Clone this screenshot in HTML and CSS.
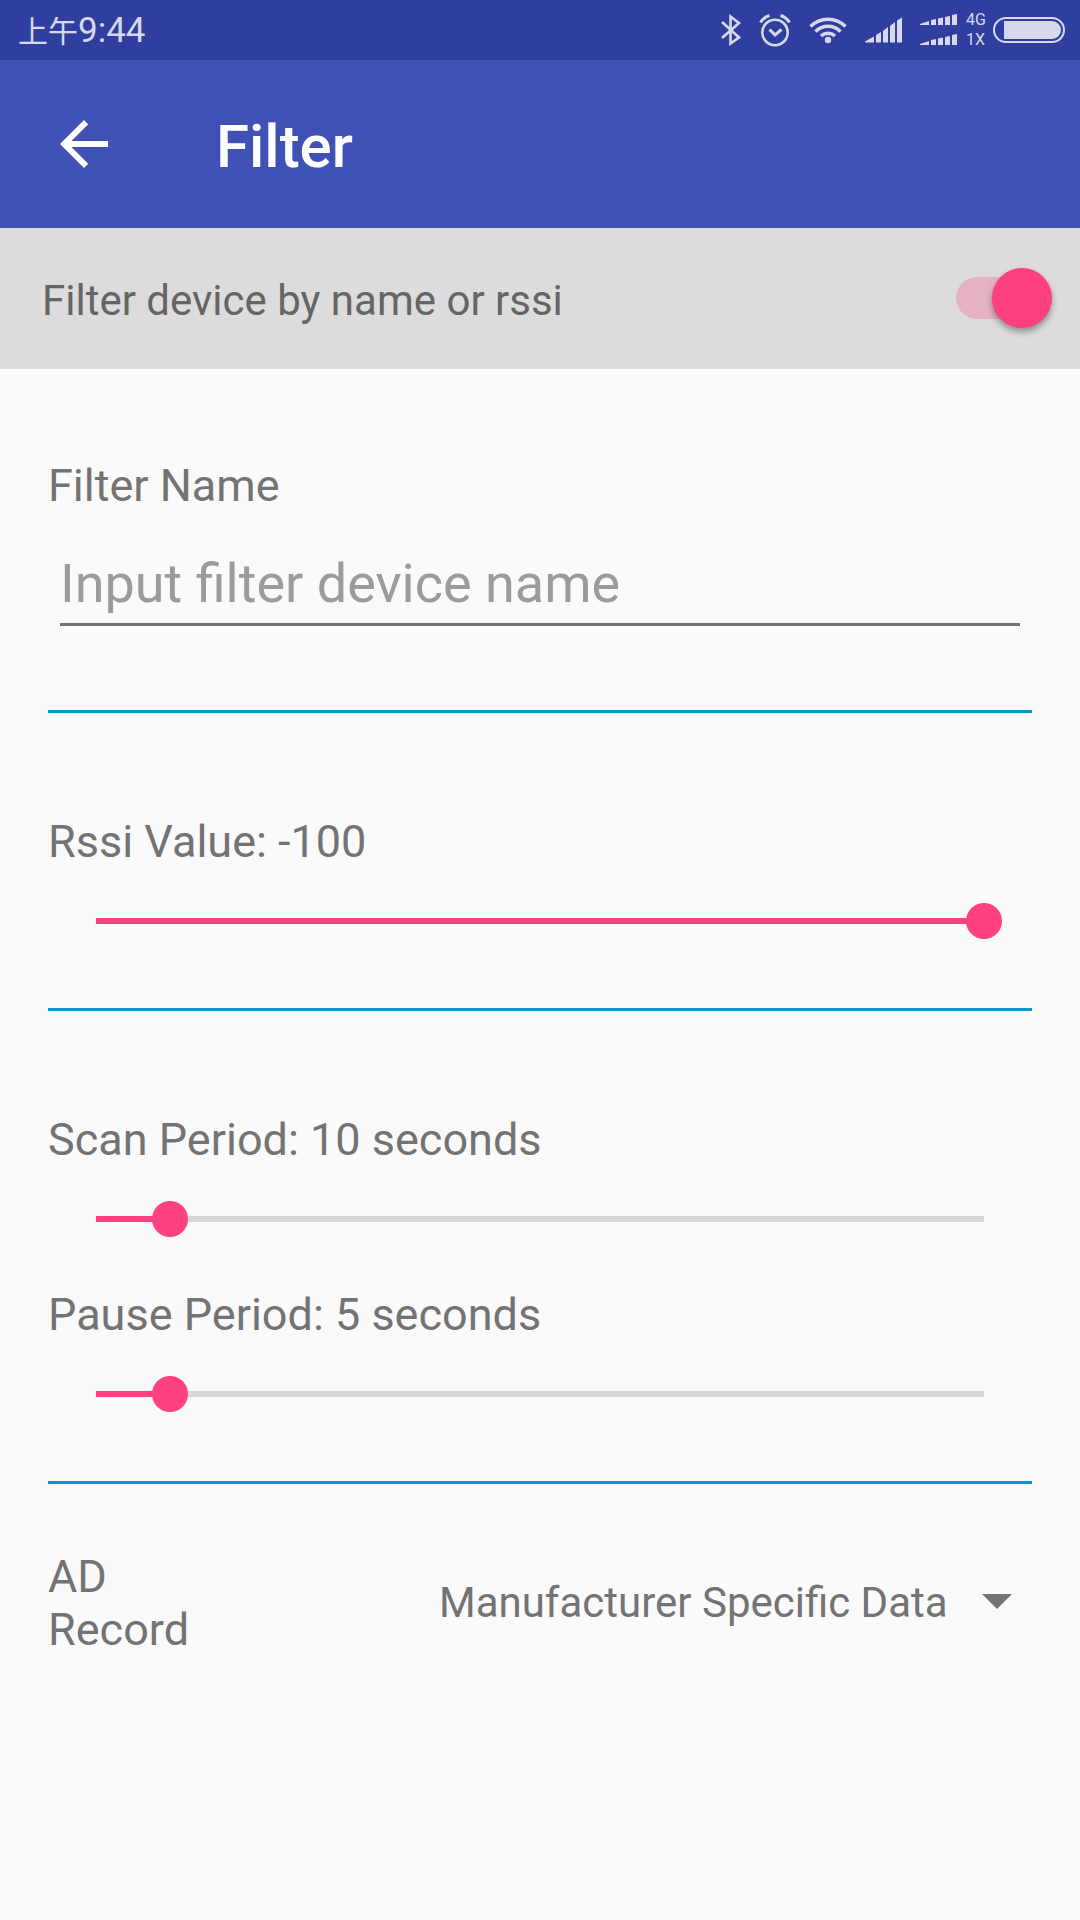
FILE: index.html
```html
<!DOCTYPE html>
<html lang="en">
<head>
<meta charset="utf-8">
<meta name="viewport" content="width=device-width, initial-scale=1">
<title>Filter</title>
<link rel="stylesheet" href="styles.css">
</head>
<body>
<div class="status">
  <div class="status-time"><span class="status-period" lang="zh">上午</span><span>9:44</span></div>
  <div class="status-icons">
    <svg width="20" height="32" viewBox="0 0 20 32" fill="none" stroke="currentColor" stroke-width="2.6" aria-hidden="true"><path d="M1 8 18 23.5 9.500 29.500V2.500L18 9 1 24"/></svg>
    <svg width="32" height="34" viewBox="0 0 32 34" fill="none" stroke="currentColor" stroke-width="2.600" aria-hidden="true"><circle cx="16" cy="19.500" r="12.700"/><path d="m10.500 16.500 5.500 5.500 6.500-5.500" stroke-width="3"/><path d="M1.500 9.500Q5 4 10.500 2.500M30.500 9.500Q27 4 21.500 2.500" stroke-width="3"/></svg>
    <svg width="38" height="28" viewBox="0 0 38 28" fill="none" stroke="currentColor" stroke-width="3.500" aria-hidden="true"><path d="M1.500 10.500a24.500 24.500 0 0 1 35 0M6.500 15.500a17.500 17.500 0 0 1 25 0M12 20a10.500 10.500 0 0 1 14 0"/><circle cx="19" cy="24" r="3.200" fill="currentColor" stroke="none"/></svg>
    <svg width="37" height="26" viewBox="0 0 37 26" fill="currentColor" aria-hidden="true"><path d="M0 24.500 9 19.500V25.500H0zM11 18 16 15V25.500H11zM18 14 23 10V25.500H18zM25 9 30 5V25.500H25zM32 3.500 37 .5V25.500H32z"/></svg>
    <svg width="37" height="32" viewBox="0 0 37 32" fill="currentColor" aria-hidden="true"><path id="bars" d="M0 10 9 7V11H0zM11 6 16 5V11H11zM18 4.500 23 3.500V11H18zM25 3 30 2V11H25zM32 1 37 0V11H32z"/><use href="#bars" y="20"/></svg>
    <div class="status-net"><span>4G</span><span>1X</span></div>
    <svg width="72" height="26" viewBox="0 0 72 26" aria-hidden="true"><rect x="1" y="1" width="70" height="24" rx="12" fill="none" stroke="currentColor" stroke-width="2"/><path d="M11 4H59a9 9 0 0 1 0 18H11z" fill="currentColor"/></svg>
  </div>
</div>
<header class="appbar">
  <button class="back" type="button" aria-label="Back"><svg width="72" height="72" viewBox="0 0 24 24" fill="currentColor"><path d="M20 11H7.830l5.590-5.590L12 4l-8 8 8 8 1.410-1.410L7.830 13H20v-2z"/></svg></button>
  <h1 class="title">Filter</h1>
</header>
<div class="toggle">
  <label class="toggle-label" for="enabled">Filter device by name or rssi</label>
  <input class="switch" id="enabled" type="checkbox" role="switch" checked>
</div>
<main class="form">
  <section class="section section-name">
    <label class="label" for="name">Filter Name</label>
    <input class="text-input" id="name" type="text" placeholder="Input filter device name">
  </section>
  <section class="section">
    <div class="field">
      <label class="label" for="rssi">Rssi Value: -100</label>
      <input class="slider" id="rssi" type="range" min="0" max="100" value="100" style="--fill: 1">
    </div>
  </section>
  <section class="section">
    <div class="field">
      <label class="label" for="scan">Scan Period: 10 seconds</label>
      <input class="slider" id="scan" type="range" min="5" max="65" value="10" style="--fill: calc(5 / 60)">
    </div>
    <div class="field">
      <label class="label" for="pause">Pause Period: 5 seconds</label>
      <input class="slider" id="pause" type="range" min="0" max="60" value="5" style="--fill: calc(5 / 60)">
    </div>
  </section>
  <section class="record">
    <label class="label record-label" for="record">AD Record</label>
    <div class="select-wrap">
      <select class="select" id="record"><option>Manufacturer Specific Data</option></select>
      <svg class="caret" width="30" height="15" viewBox="0 0 30 15" fill="currentColor" aria-hidden="true"><path d="M0 0H30L15 15z"/></svg>
    </div>
  </section>
</main>
</body>
</html>
```
FILE: styles.css
```css
* { box-sizing: border-box; }

body {
  margin: 0;
  min-height: 100vh;
  background: #fafafa;
  color: #737373;
  font-family: Roboto, "Noto Sans CJK SC", sans-serif;
  font-size: 45px;
  line-height: 53px;
}

svg { display: block; flex: none; }
input, select, button { margin: 0; padding: 0; border: 0; background: none; font: inherit; color: inherit; }

.status {
  display: flex;
  align-items: center;
  justify-content: space-between;
  height: 60px;
  padding: 0 15px 0 18px;
  background: #303f9f;
  color: #d6d9ec;
}
.status-time { display: flex; align-items: baseline; font-size: 35px; line-height: 60px; }
.status-period { font-family: "Noto Sans CJK SC", sans-serif; font-size: 30px; }
.status-icons { display: flex; align-items: center; gap: 18px; }
.status-net {
  display: flex;
  flex-direction: column;
  width: 21px;
  margin: 0 -12px 0 -9px;
  font-size: 16px;
  line-height: 20px;
}

.appbar { display: flex; align-items: center; height: 168px; background: #3f51b5; color: #fff; }
.back { display: grid; place-items: center; width: 168px; height: 168px; }
.title { margin: 0 0 0 48px; padding-top: 6px; font-size: 60px; line-height: 70px; font-weight: 500; }

.toggle {
  display: flex;
  align-items: center;
  justify-content: space-between;
  height: 141px;
  padding: 0 28px 1px 42px;
  background: #dcdcdc;
  color: #656565;
  font-size: 42px;
}
.toggle-label { padding-top: 5px; }
.switch {
  appearance: none;
  position: relative;
  width: 96px;
  height: 42px;
  border-radius: 21px;
  background: #bbb;
}
.switch::before {
  content: "";
  position: absolute;
  top: -9px;
  left: 0;
  width: 60px;
  height: 60px;
  border-radius: 50%;
  background: #fafafa;
  box-shadow: 0 4px 6px rgba(0, 0, 0, .35);
}
.switch:checked { background: #e4b2c4; }
.switch:checked::before { left: auto; right: 0; background: #fc4080; }

.form { padding: 0 48px; }
.section { display: flex; flex-direction: column; gap: 51px; padding: 102px 0 69px; border-bottom: 3px solid #0099cc; }
.section-name { gap: 40px; padding: 90px 0 84px; }
.label { display: block; }

.text-input {
  height: 74px;
  margin: 0 12px;
  padding-bottom: 9px;
  border-bottom: 3px solid #737373;
  outline: 0;
  font-size: 54px;
  line-height: 62px;
}
.text-input::placeholder { color: #9b9b9b; opacity: 1; }

.field { display: flex; flex-direction: column; gap: 35px; }
.slider {
  appearance: none;
  height: 36px;
  margin: 0 30px;
  background:
    linear-gradient(#ff4081, #ff4081) 18px center / calc((100% - 36px) * var(--fill)) 6px no-repeat,
    linear-gradient(#d7d7d7, #d7d7d7) 18px center / calc(100% - 36px) 6px no-repeat;
}
.slider::-webkit-slider-thumb {
  appearance: none;
  width: 36px;
  height: 36px;
  border-radius: 50%;
  background: #ff4081;
}

.record { display: flex; align-items: center; justify-content: space-between; padding-top: 66px; }
.record-label { width: 200px; }
.select-wrap { display: flex; align-items: center; gap: 34px; padding-right: 20px; }
.select { appearance: none; font-size: 42px; line-height: 50px; }
.caret { margin-bottom: 3px; }
```
